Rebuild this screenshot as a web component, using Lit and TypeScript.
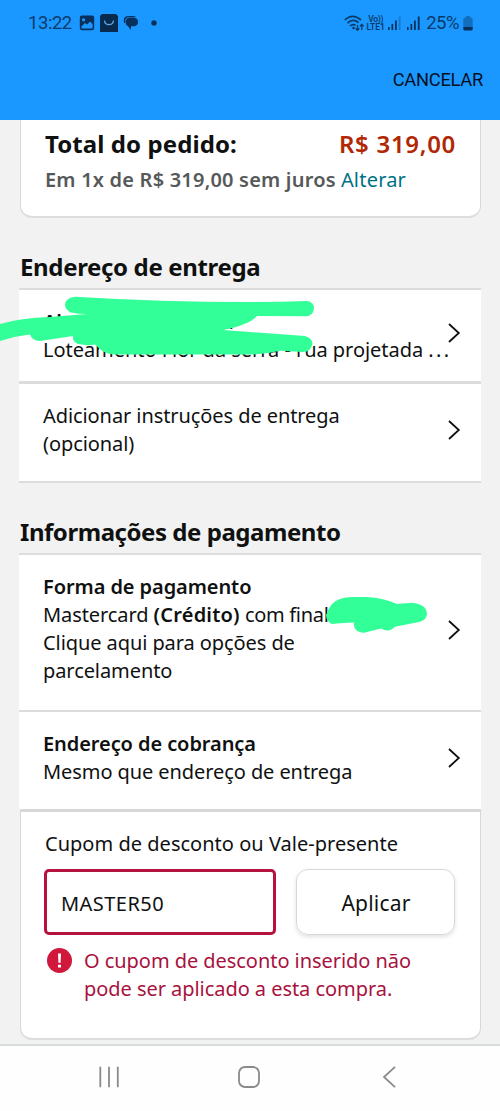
import { LitElement, html, css, svg } from "lit";
import { customElement } from "lit/decorators.js";

const chevron = html`<svg class="chevron" width="14" height="22" viewBox="0 0 14 22">
  <path d="M2 2 L11.8 11 L2 20" fill="none" stroke="#0f1111" stroke-width="1.8" />
</svg>`;

const bars = (dim: boolean) => svg`
  <rect x="0" y="11" width="1.6" height="3"/>
  <rect x="3.5" y="8" width="1.7" height="6"/>
  <rect x="7" y="4.5" width="1.8" height="9.5"/>
  <rect x="10.8" y="0.5" width="1.8" height="13.5" opacity=${dim ? 0.3 : 1}/>`;

@customElement("status-bar")
export class StatusBar extends LitElement {
  static styles = css`
    :host { display: flex; align-items: center; height: 46px; padding: 0 27px 0 28px; color: #0b3a6b;
      font: 18.5px/47px Roboto, sans-serif; box-sizing: border-box; }
    svg { display: block; fill: #07315c; flex: none; }
    .time { width: 51px; letter-spacing: -0.45px; }
    .picture { margin-right: 5px; }
    .store { margin-right: 5px; }
    .chat { margin-right: 12px; }
    .grow { flex: 1; }
    .volte { display: flex; flex-direction: column; width: 19px; margin: 0 3px 0 2px; font: 600 8.5px/8px Roboto, sans-serif; align-items: center; }
    .volte .top { letter-spacing: -0.3px; }
    .volte .bottom { letter-spacing: -0.1px; }
    .signal { margin-right: 6px; }
    .pct { letter-spacing: -0.5px; margin-right: 4px; }
  `;
  render() {
    return html`
      <span class="time">13:22</span>
      <svg class="picture" width="16" height="16" viewBox="0 0 16 16">
        <path fill-rule="evenodd" d="M3 .5H13Q15.2 .5 15.2 2.8V13Q15.2 15.2 13 15.2H3Q.8 15.2 .8 13V2.8Q.8 .5 3 .5ZM2.5 11.5V13.5H13.6V9.2L11 6.6 8.2 9.5 5.9 8ZM4.5 3.2A1.6 1.6 0 1 0 4.6 6.4A1.6 1.6 0 1 0 4.5 3.2Z"/>
      </svg>
      <svg class="store" width="18" height="20" viewBox="0 0 18 20">
        <path fill="#082b4d" d="M2 1H16L18 3V19H0V3Z"/>
        <path d="M4.5 7.5C5 13 13 13 13.5 7.5" fill="none" stroke="#5fa6e6" stroke-width="1.3"/>
      </svg>
      <svg class="chat" width="16" height="16" viewBox="0 0 16 16">
        <path d="M1.2 8.4Q-.8 1 6 1H10Q12 1 13 2H6Q1.7 2.6 2.4 7Z"/>
        <path d="M6.5 2.5H11Q15 3 15 7 15 11 10.5 11.3H8L7.8 15 4.8 11Q2.5 10 2.6 7 2.8 3 6.5 2.5Z"/>
      </svg>
      <svg width="6" height="6" viewBox="0 0 6 6"><circle cx="3" cy="3" r="2.7"/></svg>
      <span class="grow"></span>
      <svg width="20" height="17" viewBox="0 0 20 17">
        <g fill="none" stroke="#0b3a6b" stroke-width="1.7">
          <path d="M.8 5Q8.5 -2.2 17 5M3.5 8Q9 3 14.5 7.6M6 11Q9 8.5 11.5 10.3"/>
          <path stroke-width="1.3" d="M13.5 10V15M11.6 13.2L13.5 15.2 15.4 13.2M17.8 15V9.5M16 11.2L17.8 9.4 19.6 11.2"/>
        </g>
        <circle cx="9.5" cy="13" r="1.2"/>
      </svg>
      <span class="volte"><span class="top">Vo))</span><span class="bottom">LTE1</span></span>
      <svg class="signal" width="13" height="15" viewBox="0 0 13 15">${bars(true)}</svg>
      <svg class="signal" width="13" height="15" viewBox="0 0 13 15">${bars(false)}</svg>
      <span class="pct">25%</span>
      <svg width="10" height="15" viewBox="0 0 10 15">
        <path opacity=".4" d="M3 0H7V1.5H8Q9.7 1.5 9.7 3.2V12H.3V3.2Q.3 1.5 2 1.5H3Z"/>
        <path d="M.3 11H9.7V13Q9.7 14.6 8 14.6H2Q.3 14.6 .3 13Z"/>
      </svg>`;
  }
}

@customElement("app-root")
export class AppRoot extends LitElement {
  static styles = css`
    :host { display: block; position: relative; width: 500px; height: 1111px; overflow: hidden; background: #f2f2f2;
      color: #0f1111; font: 20px/28px "Noto Sans", sans-serif; letter-spacing: -0.08px; }
    * { box-sizing: border-box; }
    .header { height: 120px; background: #1a98ff; }
    .cancel { display: flex; justify-content: flex-end; padding: 20px 17px 0 0; color: #04101f;
      font: 18.3px/28px Roboto, sans-serif; letter-spacing: -0.25px; }
    .content { padding: 0 19px; height: 924px; display: flex; flex-direction: column; }
    .card { background: #fff; border: 1px solid #d5d9d9; border-bottom: 2px solid #dcdedd; margin: 0 0 0 1px; }
    .total { height: 98px; border-top: 0; border-radius: 0 0 12px 12px; padding: 8px 24px 0; }
    .total-row { display: flex; justify-content: space-between; font-weight: 700; font-size: 24px; line-height: 32px; letter-spacing: 0.08px; }
    .price { color: #b12704; font-weight: 600; letter-spacing: 0.7px; }
    .installments { color: #565959; line-height: 28px; margin-top: 6px; }
    .installments b { letter-spacing: 0.2px; }
    .link { color: #007185; letter-spacing: 0.2px; }
    b { font-weight: 600; }
    h2 { margin: 0 0 0 1px; font-size: 24px; line-height: 32px; font-weight: 700; white-space: nowrap; }
    .h-delivery { margin-top: 33px; height: 37px; letter-spacing: -0.35px; }
    .h-payment { margin-top: 32px; height: 38px; line-height: 33px; letter-spacing: -0.45px; }
    .row { display: flex; align-items: center; justify-content: space-between; background: #fff;
      padding: 0 20px 0 24px; border-top: 2px solid #dcdcdc; width: 462px; white-space: nowrap; }
    .chevron { flex: none; margin-bottom: 6px; }
    .text { flex: 1; width: 0; align-self: flex-start; padding-top: 18px; }
    .address { height: 93px; }
    .street { letter-spacing: -0.04px; }
    .dots { letter-spacing: 2.4px; }
    .instructions { height: 102px; border-top-width: 3px; border-bottom: 2px solid #dcdcdc; }
    .method { height: 157px; }
    .credit { letter-spacing: 0.2px; }
    .final { letter-spacing: -0.3px; }
    .billing { height: 99px; }
    .name { display: flex; gap: 160px; }
    .coupon { height: 231px; border-top: 3px solid #d8d8d8; border-radius: 0 0 12px 12px; padding: 18px 24px 0; }
    .label { letter-spacing: 0.02px; }
    .form { display: grid; grid-template-columns: 232px 159px; gap: 20px; margin-top: 11px; margin-left: -1px; }
    .input { height: 66px; border: 3px solid #b5123e; border-radius: 5px; padding: 0 14px; line-height: 63px; letter-spacing: 0.45px; }
    .apply { height: 66px; border: 1px solid #d5d9d9; border-radius: 12px; text-align: center; font-size: 21px; line-height: 66px;
      padding-left: 1px; box-shadow: 0 2px 4px rgba(15, 17, 17, 0.12); letter-spacing: 0.2px; }
    .error { display: flex; gap: 12px; color: #a8123e; margin-top: 12px; padding-left: 2px; white-space: nowrap; letter-spacing: -0.05px; }
    .error svg { margin-top: 1px; }
    .nav { height: 67px; border-top: 2px solid #d9dcdc; background: #fefefe; display: flex; align-items: flex-start; padding: 20px 0 0 98px; }
    .nav svg { fill: none; stroke: #8a8a8a; stroke-width: 1.8; }
    .nav .home { margin: 0 122px 0 118px; }
    .marker { position: absolute; left: 0; top: 0; fill: #33ff99; pointer-events: none; }
  `;
  render() {
    return html`
      <div class="header">
        <status-bar></status-bar>
        <div class="cancel">CANCELAR</div>
      </div>
      <div class="content">
        <div class="card total">
          <div class="total-row"><span>Total do pedido:</span><span class="price">R$ 319,00</span></div>
          <div class="installments"><b>Em 1x de R$ 319,00 sem juros</b> <span class="link">Alterar</span></div>
        </div>
        <h2 class="h-delivery">Endereço de entrega</h2>
        <div class="row address">
          <div class="text"><b class="name"><span>Al</span><span>a</span></b><span class="street">Loteamento Flor da serra - rua projetada <span class="dots">...</span></span></div>
          ${chevron}
        </div>
        <div class="row instructions">
          <div class="text">Adicionar instruções de entrega<br />(opcional)</div>
          ${chevron}
        </div>
        <h2 class="h-payment">Informações de pagamento</h2>
        <div class="row method">
          <div class="text"><b>Forma de pagamento</b><br />Mastercard <b class="credit">(Crédito)</b> <span class="final">com final</span><br />Clique aqui para opções de<br />parcelamento</div>
          ${chevron}
        </div>
        <div class="row billing">
          <div class="text"><b>Endereço de cobrança</b><br />Mesmo que endereço de entrega</div>
          ${chevron}
        </div>
        <div class="card coupon">
          <div class="label">Cupom de desconto ou Vale-presente</div>
          <div class="form">
            <div class="input">MASTER50</div>
            <div class="apply">Aplicar</div>
          </div>
          <div class="error">
            <svg width="25" height="25" viewBox="0 0 25 25">
              <circle cx="12.5" cy="12.5" r="12.5" fill="#d0173c" />
              <path d="M11 5.5H14L13.6 14.8H11.4ZM11 16.8H14V19.6H11Z" fill="#fff" />
            </svg>
            <span>O cupom de desconto inserido não<br />pode ser aplicado a esta compra.</span>
          </div>
        </div>
      </div>
      <div class="nav">
        <svg width="22" height="22" viewBox="0 0 22 22"><path d="M2.3 .8V21.2M11 .8V21.2M19.8 .8V21.2" /></svg>
        <svg class="home" width="22" height="22" viewBox="0 0 22 22"><rect x="1" y="1" width="20" height="20" rx="6" /></svg>
        <svg width="14" height="22" viewBox="0 0 14 22"><path d="M13 .8L2 11 13 21.2" /></svg>
      </div>
      <svg class="marker" width="500" height="700" viewBox="0 0 500 700">
        <path d="M65 305Q65 298 75 296.8Q160 302 250 302Q280 302 307 301Q314 302 314 308.5Q313 316 306 316.3L257 316Q249 325 223 330L250 332L305 336Q312 338 312.5 343.5Q311 352 303 352L280 350.7Q265 354.5 250 354.5H118Q108 355 101 350L95 344.5Q88 346 78 344Q72 341 73 336L40 341Q32 341 30 334.5Q15 336 0 341V324Q20 318 50 317L87 314Q78 314 71 312.5Q65 310 65 305Z" />
        <path d="M326 615Q328 609 332 604Q339 597 352 597H367Q384 598 397 604L412 602.7Q426 604 427 613.5Q427 620 419 622L395 626.7Q389 633 381 628.5L364 632.7Q353 632 354 622.5Q343 622.5 331.7 624Q326 621 326 615Z" />
      </svg>`;
  }
}
